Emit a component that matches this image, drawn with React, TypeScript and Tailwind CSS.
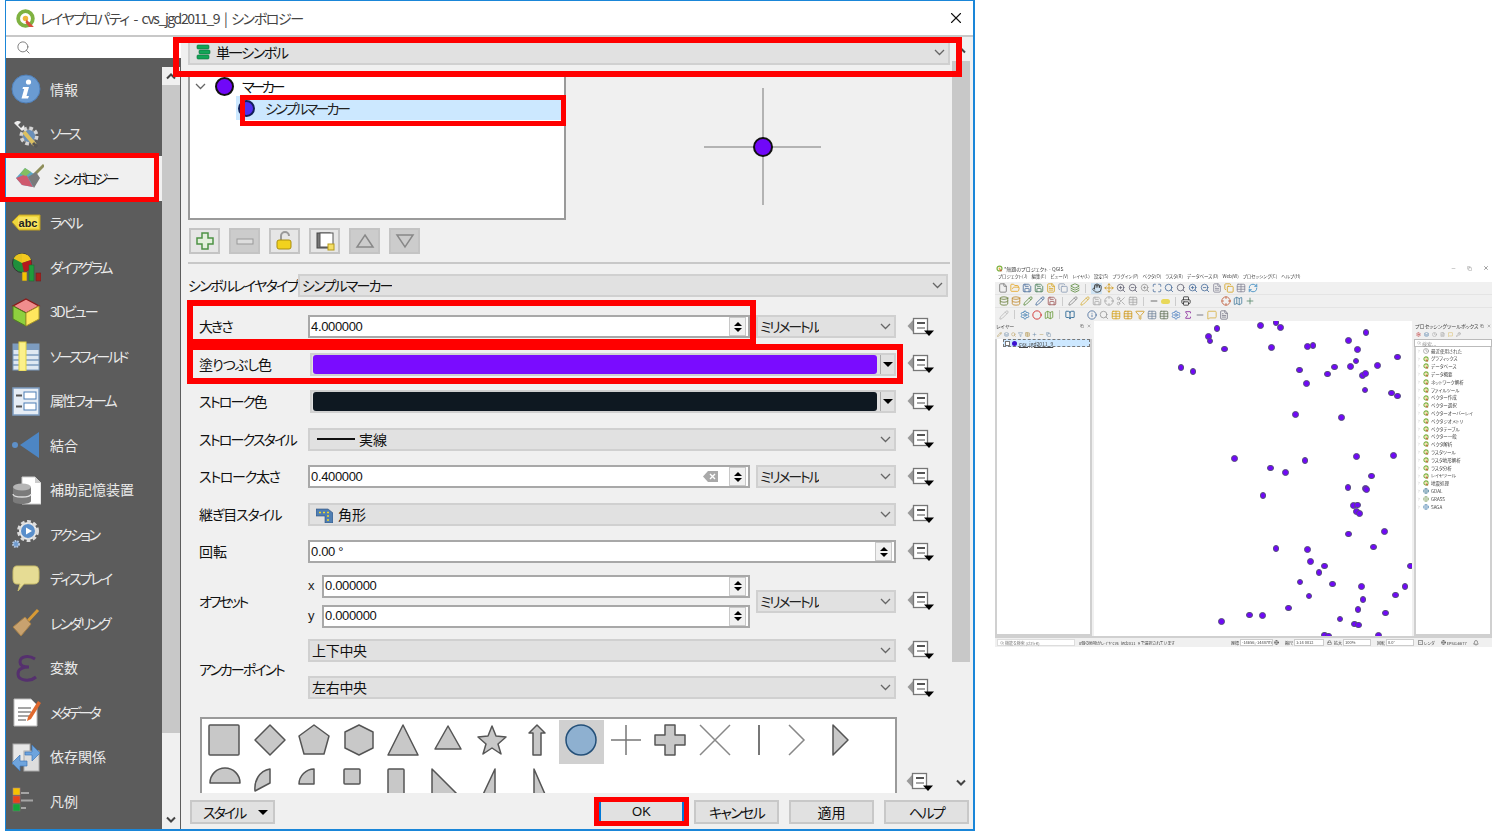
import type { ReactNode } from 'react';
import {
  Bell, BookOpen, Check, ChevronRight, Circle, Clock, Copy, Crosshair, Database, File, FileText, Filter, FolderOpen, Globe, Hand,
  Info, Layers, Lock, Map as MapIcon, Maximize, MessageSquare, Minus, Move, Pencil, Plus, Printer, RefreshCw, Save, Scissors, Search,
  Settings, Sigma, Table, Wrench, X, ZoomIn, ZoomOut,
} from 'lucide-react';

const Qlogo = ({ size }: { size: number }) => (
  <svg width={size} height={size} viewBox="0 0 20 20">
    <circle cx="10" cy="10" r="7" fill="none" stroke="#7fb241" strokeWidth="3.6" />
    <circle cx="10" cy="10" r="2.6" fill="#efb73c" />
    <path d="M11 11 L18 18 L13.5 18 L10 14 Z" fill="#d94f3d" />
  </svg>
);

const SidebarIcons: Record<string, ReactNode> = {
  info: (
    <>
      <circle cx="15" cy="15" r="14" fill="#6a9bd2" stroke="#4f7fb8" />
      <circle cx="17.5" cy="8" r="2.6" fill="#fff" />
      <path d="M12 13 H18 L15.5 22 H18 L17 24.5 H10.5 L13.2 15 H11.5 Z" fill="#fff" />
    </>
  ),
  source: (
    <>
      <circle cx="18" cy="17" r="7.5" fill="#888" stroke="#d5d5d5" strokeWidth="4" strokeDasharray="3.5 2.4" />
      <circle cx="18" cy="17" r="6" fill="#6a8fb9" />
      <path d="M3 4 a5 5 0 0 1 7 -1 l-3 3 l3 3 l3 -3 a5 5 0 0 1 -2 6 z" fill="#eee" />
      <path d="M13 13 L24 26" stroke="#dcc060" strokeWidth="4" />
      <path d="M22 24 L26 28" stroke="#555" strokeWidth="3" />
    </>
  ),
  symbology: (
    <>
      <path d="M2 15 L11 5 L23 13 L19 24 L8 22 Z" fill="#5aa7c8" />
      <path d="M2 15 L12 11 L19 24 L8 22 Z" fill="#cf5a6e" />
      <path d="M6 11 L11 5 L17 9 L12 13 Z" fill="#82bf62" />
      <path d="M20 12 L30 2" stroke="#8e8e5a" strokeWidth="3" />
      <path d="M14 14 L22 9 L26 15 L20 25 Z" fill="#7a7a7a" />
    </>
  ),
  label: (
    <>
      <path d="M1 14 L8 7 H29 V22 H8 Z" fill="#f0d63c" stroke="#c0a020" />
      <rect x="7" y="9" width="20" height="11" rx="2" fill="#f7e360" />
      <text x="17" y="19" textAnchor="middle" fontSize="11" fontWeight="700" fontFamily="Liberation Sans" fill="#222">abc</text>
    </>
  ),
  diagram: (
    <>
      <circle cx="11" cy="11" r="9.5" fill="#1f8f3c" stroke="#333" />
      <path d="M11 11 V1.5 A9.5 9.5 0 0 1 20 8 Z" fill="#f4c91e" />
      <path d="M2.5 6.5 A9.5 9.5 0 0 1 11 1.5 V11 Z" fill="#e8c41f" />
      <path d="M11 11 L20 8 A9.5 9.5 0 0 1 13 20.5 Z" fill="#b5181d" />
      <rect x="11" y="20" width="5" height="9" fill="#f4c300" stroke="#665" strokeWidth=".6" />
      <rect x="18" y="13" width="5" height="16" fill="#1f9c3c" stroke="#263" strokeWidth=".6" />
      <rect x="25" y="21" width="5" height="8" fill="#a5201d" stroke="#622" strokeWidth=".6" />
    </>
  ),
  cube: (
    <>
      <path d="M15 2 L28 9 L15 16 L2 9 Z" fill="#f08d8d" stroke="#8b1a1a" strokeWidth="1.4" />
      <path d="M2 9 L15 16 V29 L2 22 Z" fill="#8ed03e" stroke="#4f7f20" />
      <path d="M28 9 L15 16 V29 L28 22 Z" fill="#ffe65e" stroke="#a8982a" />
    </>
  ),
  fields: (
    <>
      <rect x="2" y="3" width="26" height="26" fill="#dfe8f2" stroke="#7d9cc0" />
      <rect x="2" y="3" width="26" height="6" fill="#7d9cc0" />
      <path d="M2 14 H28 M2 19 H28 M2 24 H28" stroke="#7d9cc0" strokeWidth="1.5" />
      <rect x="8" y="1" width="7" height="29" fill="#fbf08a" stroke="#e0d040" />
    </>
  ),
  form: (
    <>
      <rect x="2" y="2" width="26" height="27" fill="#e6edf5" stroke="#7d9cc0" strokeWidth="1.5" />
      <rect x="13" y="6" width="12" height="7" fill="#fff" stroke="#4d7fb6" />
      <rect x="13" y="17" width="12" height="7" fill="#fff" stroke="#4d7fb6" />
      <path d="M5 9.5 H11 M5 20.5 H11" stroke="#555" strokeWidth="2" />
    </>
  ),
  join: (
    <>
      <circle cx="4" cy="15" r="3" fill="#5e90c8" />
      <path d="M28 2 V28 L9 15 Z" fill="#4d86c4" />
    </>
  ),
  aux: (
    <>
      <path d="M11 2 H24 L30 8 V29 H11 Z" fill="#fff" stroke="#ccc" />
      <path d="M24 2 V8 H30" fill="#ccc" />
      <path d="M2 12 V26 C2 30 20 30 20 26 V12 Z" fill="#7b7b7b" />
      <ellipse cx="11" cy="12" rx="9" ry="3.5" fill="#b5b5b5" />
      <path d="M2 19 C2 23 20 23 20 19" fill="none" stroke="#ddd" strokeWidth="1.3" />
    </>
  ),
  action: (
    <>
      <circle cx="17" cy="12" r="9" fill="#eee" stroke="#ddd" strokeWidth="4" strokeDasharray="3.5 2.4" />
      <circle cx="17" cy="12" r="7" fill="#5a8fcb" />
      <path d="M15 8.5 L21 12 L15 15.5 Z" fill="#fff" />
      <circle cx="5" cy="25" r="3" fill="#6f9cd0" stroke="#b5c9e3" strokeWidth="2" strokeDasharray="1.5 1" />
    </>
  ),
  display: (
    <path d="M6 2 H23 C27 2 28 4 28 8 V14 C28 19 26 20 22 20 H13 L7 27 L9 20 H6 C3 20 2 18 2 14 V8 C2 4 3 2 6 2 Z" fill="#e6dc94" stroke="#c9bd6b" />
  ),
  rendering: (
    <>
      <path d="M15 15 L27 2" stroke="#d79a35" strokeWidth="3" />
      <path d="M2 19 L14 9 L20 16 L10 28 Z" fill="#c8a26f" stroke="#a57f48" />
    </>
  ),
  variable: (
    <path d="M24 6 C18 2 9 3 9 9 C9 13 13 14 18 14 C11 14 7 16 7 21 C7 28 19 29 25 24" fill="none" stroke="#55306e" strokeWidth="3" />
  ),
  meta: (
    <>
      <path d="M3 2 H20 L26 8 V29 H3 Z" fill="#fff" stroke="#bbb" />
      <path d="M7 11 H20 M7 15 H20 M7 19 H18 M7 23 H15" stroke="#888" strokeWidth="1.3" />
      <path d="M17 20 L27 4 L30 6 L20 22 L16 24 Z" fill="#e0692e" />
    </>
  ),
  deps: (
    <>
      <rect x="2" y="2" width="17" height="20" fill="#e8e8e8" stroke="#aaa" />
      <rect x="13" y="9" width="15" height="20" fill="#ddd" stroke="#aaa" />
      <path d="M14 10 H21 V3 L29 11 L21 19 V13 H14 Z" fill="#6ea4dd" stroke="#3c77b8" strokeWidth=".7" />
      <path d="M16 19 H9 V13 L1 21 L9 29 V24 H16 Z" fill="#6ea4dd" stroke="#3c77b8" strokeWidth=".7" />
    </>
  ),
  legend: (
    <>
      <rect x="2" y="2" width="7" height="7" fill="#f6c200" stroke="#a88" strokeWidth=".6" />
      <rect x="2" y="10" width="7" height="7" fill="#e8421a" stroke="#a66" strokeWidth=".6" />
      <rect x="2" y="18" width="7" height="7" fill="#12a43a" stroke="#686" strokeWidth=".6" />
      <path d="M10 7 H18 M10 14.5 H22 M10 22 H15" stroke="#a5a5a5" strokeWidth="2" />
    </>
  ),
};

// third value: the kana run narrow in the original UI font, kanji labels do not
const sidebarItems: [string, string, string][] = [
  ['info', '情報', ''], ['source', 'ソース', 'tracking-[-2.8px]'], ['symbology', 'シンボロジー', 'tracking-[-2.7px]'], ['label', 'ラベル', 'tracking-[-3px]'],
  ['diagram', 'ダイアグラム', 'tracking-[-2.3px]'], ['cube', '3Dビュー', 'tracking-[-1.8px]'], ['fields', 'ソースフィールド', 'tracking-[-2.6px]'], ['form', '属性フォーム', 'tracking-[-1.9px]'],
  ['join', '結合', ''], ['aux', '補助記憶装置', ''], ['action', 'アクション', 'tracking-[-2.4px]'], ['display', 'ディスプレイ', 'tracking-[-2px]'],
  ['rendering', 'レンダリング', 'tracking-[-2.5px]'], ['variable', '変数', ''], ['meta', 'メタデータ', 'tracking-[-3px]'], ['deps', '依存関係', ''], ['legend', '凡例', ''],
];

const Chevron = ({ className = 'text-[#666]' }: { className?: string }) => (
  <svg width="11" height="7" viewBox="0 0 11 7" className={className}>
    <path d="M1 1 L5.5 5.5 L10 1" fill="none" stroke="currentColor" strokeWidth="1.3" />
  </svg>
);

const ChevronUpBold = () => (
  <svg width="10" height="7" viewBox="0 0 10 7"><path d="M1 5.5 L5 1.5 L9 5.5" fill="none" stroke="#444" strokeWidth="2" /></svg>
);
const ChevronDownBold = () => (
  <svg width="10" height="7" viewBox="0 0 10 7"><path d="M1 1.5 L5 5.5 L9 1.5" fill="none" stroke="#444" strokeWidth="2" /></svg>
);

const DataDefined = () => (
  <svg width="27" height="22" viewBox="0 0 27 22" className="shrink-0">
    <path d="M0.5 10 L7 3 H8 V17 H7 Z" fill="#9a9a9a" />
    <rect x="6.5" y="2.5" width="14" height="15" fill="#fff" stroke="#777" strokeWidth="1.3" />
    <path d="M10 7 H18" stroke="#555" strokeWidth="2" />
    <path d="M10 12 H18" stroke="#888" strokeWidth="1.5" />
    <path d="M17 14.5 H27 L22 20 Z" fill="#000" />
  </svg>
);

const Spin = ({ className = '' }: { className?: string }) => (
  <div className={`flex h-[19px] w-[17px] shrink-0 flex-col items-center justify-center gap-[2px] border border-[#c8c8c8] bg-[#f0f0f0] ${className}`}>
    <div className="h-0 w-0 border-x-[4px] border-b-[4px] border-x-transparent border-b-black" />
    <div className="h-0 w-0 border-x-[4px] border-t-[4px] border-x-transparent border-t-black" />
  </div>
);

const NumInput = ({ value, clear, className }: { value: string; clear?: boolean; className: string }) => (
  <div className={`flex h-[23px] items-center border-2 border-[#a8a8a8] bg-white pl-[1px] pr-[2px] ${className}`}>
    <span className="flex-1 font-['Liberation_Sans',sans-serif] text-[13px] tracking-[-0.35px] text-[#111]">{value}</span>
    {clear && (
      <svg width="15" height="11" viewBox="0 0 15 11" className="mr-[11px]">
        <path d="M0 5.5 L5 0 H15 V11 H5 Z" fill="#a9a9a9" />
        <path d="M7 3 L12 8 M12 3 L7 8" stroke="#fff" strokeWidth="1.4" />
      </svg>
    )}
    <Spin />
  </div>
);

const Combo = ({ children, className }: { children: ReactNode; className: string }) => (
  <div className={`flex h-[23px] items-center justify-between border-2 border-[#d0d0d0] bg-[#e1e1e1] pl-[2px] pr-[3px] text-[14px] text-[#111] ${className}`}>
    <div className="flex items-center gap-[4px] overflow-hidden whitespace-nowrap">{children}</div>
    <Chevron />
  </div>
);

const Unit = () => <Combo className="ml-[6px] w-[140px] text-[#222]"><span className="tracking-[-2.3px]">ミリメートル</span></Combo>;

const ColorButton = ({ color }: { color: string }) => (
  <div className="ml-[2px] flex h-[23px] w-[586px] items-center border-2 border-[#d0d0d0] bg-[#e1e1e1] pl-[1px]">
    <div className={`h-[19px] w-[564px] rounded-[3px] ${color}`} />
    <div className="ml-[3px] h-[19px] w-px bg-[#aaa]" />
    <div className="ml-[2px] h-0 w-0 border-x-[5px] border-t-[5px] border-x-transparent border-t-black" />
  </div>
);

const FormRow = ({ label, track = 'tracking-[-1.8px]', children }: { label: string; track?: string; children: ReactNode }) => (
  <div className="flex h-[37.5px] items-center pl-[18px]">
    <div className={`w-[109px] shrink-0 whitespace-nowrap text-[14px] text-[#111] ${track}`}>{label}</div>
    {children}
    <div className="ml-[11px]"><DataDefined /></div>
  </div>
);

const ToolButton = ({ disabled, children }: { disabled?: boolean; children: ReactNode }) => (
  <div className={`flex h-[26px] w-[31px] items-center justify-center border-2 border-[#c4c4c4] ${disabled ? 'bg-[#cccccc]' : 'bg-[#e6e6e6]'}`}>
    <svg width="22" height="20" viewBox="0 0 22 20">{children}</svg>
  </div>
);

const sf = { fill: '#c8c8c8', stroke: '#555', strokeWidth: 1.5, strokeLinejoin: 'round' as const };

const shapesTop: ReactNode[] = [
  <rect x="6" y="7" width="30" height="30" rx="1" {...sf} />,
  <path d="M22 7 L37 22 L22 37 L7 22 Z" {...sf} />,
  <path d="M22 7 L37 18 L32 36 L12 36 L7 18 Z" {...sf} />,
  <path d="M22 7 L36 14 V30 L22 37 L8 30 V14 Z" {...sf} />,
  <path d="M22 7 L37 37 H7 Z" {...sf} />,
  <path d="M22 8 L35 31 H9 Z" {...sf} />,
  <path d="M22 8 L26 18 L36 19 L28 26 L31 36 L22 30 L13 36 L16 26 L8 19 L18 18 Z" {...sf} />,
  <path d="M22 7 L30 15 H26 V37 H18 V15 H14 Z" {...sf} />,
  <circle cx="22" cy="22" r="15" fill="#8eb0d0" stroke="#234f78" strokeWidth="1.5" />,
  <path d="M7 22 H37 M22 7 V37" stroke="#777" strokeWidth="1.5" fill="none" />,
  <path d="M17 7 H27 V17 H37 V27 H27 V37 H17 V27 H7 V17 H17 Z" {...sf} />,
  <path d="M7 7 L37 37 M37 7 L7 37" stroke="#888" strokeWidth="1.5" fill="none" />,
  <path d="M22 7 V37" stroke="#777" strokeWidth="2" fill="none" />,
  <path d="M7 7 L22 22 L7 37" stroke="#888" strokeWidth="1.5" fill="none" />,
  <path d="M7 7 L22 22 L7 37 Z" {...sf} />,
];

const shapesBottom: ReactNode[] = [
  <path d="M7 23 A15 15 0 0 1 37 23 Z" {...sf} transform="translate(0 -1)" />,
  <path d="M22 8 V22 L7 30 C6 20 11 10 22 8 Z" {...sf} />,
  <path d="M22 8 V23 H7 C7 15 14 8 22 8 Z" {...sf} />,
  <rect x="7" y="8" width="16" height="15" rx="1" {...sf} />,
  <rect x="7" y="8" width="16" height="40" rx="1" {...sf} />,
  <path d="M6 8 L34 36 H6 Z" {...sf} />,
  <path d="M25 8 V40 H10 Z" {...sf} />,
  <path d="M19 8 L33 40 H19 Z" {...sf} />,
];

/* --- miniature QGIS window --- */

const dots: [number, number][] = [
  ...[
    [140, 25], [115, 48], [119, 62], [163, 86], [32, 142], [68, 153], [271, 15], [317, 7], [331, 21], [303, 82], [412, 79], [428, 76], [387, 149],
    [408, 190], [375, 283], [513, 292], [472, 161], [492, 140], [540, 139], [557, 122], [561, 88], [535, 60], [587, 36], [622, 135], [682, 110],
    [576, 165], [586, 159], [584, 209], [663, 218], [682, 227], [193, 414], [300, 443], [346, 457], [404, 421], [559, 408], [670, 406], [604, 467],
  ].map(([x, y]): [number, number] => [76 + x / 3, y / 3 - 1]),
  ...[
    [278, 46], [533, 21], [586, 25], [589, 27], [550, 76], [562, 74], [558, 94], [567, 100], [535, 161], [642, 154], [610, 200], [317, 204], [412, 207],
    [420, 244], [462, 257], [446, 277], [720, 257], [389, 305], [486, 311], [574, 319], [704, 319], [416, 347], [676, 344], [578, 358], [355, 383],
    [563, 388], [645, 398], [237, 404], [276, 405], [154, 424], [509, 416], [552, 431], [565, 434], [463, 464], [474, 467], [625, 465],
  ].map(([x, y]): [number, number] => [76 + x / 3, 159 + y / 3]),
];

const menus = ['プロジェクト(J)', '編集(E)', 'ビュー(V)', 'レイヤ(L)', '設定(S)', 'プラグイン(P)', 'ベクタ(O)', 'ラスタ(R)', 'データベース(D)', 'Web(W)', 'プロセッシング(C)', 'ヘルプ(H)'];

const toolbox = ['最近使用された', 'グラフィックス', 'データベース', 'データ概要', 'ネットワーク解析', 'ファイルツール', 'ベクター作成', 'ベクター選択', 'ベクターオーバーレイ', 'ベクタジオメトリ', 'ベクタテーブル', 'ベクター一般', 'ベクタ解析', 'ラスタツール', 'ラスタ地形解析', 'ラスタ分析', 'レイヤツール', '地震処理', 'GDAL', 'GRASS', 'SAGA'];

const Mi = ({ icon: Icon, color }: { icon: typeof File; color: string }) => <Icon size={10} color={color} strokeWidth={2} className="shrink-0" />;
const Sep = () => <div className="mx-[3px] h-[9px] w-px shrink-0 bg-[#ccc]" />;

const row1: [typeof File, string][] = [
  [File, '#777'], [FolderOpen, '#e6a520'], [Save, '#4a6f9c'], [Save, '#4a7f5c'], [FileText, '#d6a420'], [Copy, '#8a9bb5'], [Layers, '#5a8a3c'],
];
const row1b: [typeof File, string][] = [
  [Move, '#d09a20'], [ZoomIn, '#667'], [ZoomOut, '#667'], [ZoomIn, '#999'], [Maximize, '#4a6f9c'], [Search, '#4a6f9c'], [Search, '#667'],
  [ZoomIn, '#4a6f9c'], [ZoomOut, '#4a6f9c'], [FileText, '#889'], [Copy, '#d6a420'], [Table, '#889'], [RefreshCw, '#3a8ac0'],
];
const row2: [typeof File, string][] = [[Database, '#6a7f3c'], [Database, '#c08a30'], [Pencil, '#5a8a3c'], [Pencil, '#4a6f9c'], [Save, '#a05a5a']];
const row2b: [typeof File, string][] = [[Pencil, '#888'], [Pencil, '#d6b040'], [Save, '#aaa'], [Crosshair, '#aaa'], [Scissors, '#aaa'], [Table, '#aaa']];
const row3: [typeof File, string][] = [[Info, '#4a6f9c'], [Search, '#999'], [Table, '#d6a420'], [Table, '#d09a20'], [Filter, '#d09a20'], [Table, '#7a8aa0'], [Table, '#6a7a60'], [Settings, '#4a80c0'], [Sigma, '#8a2a9a'], [Minus, '#667'], [MessageSquare, '#d6b040'], [FileText, '#778']];

const MiniWindow = () => (
  <div className="mt-[265px] ml-[20px] flex h-[382px] w-[497px] shrink-0 flex-col bg-white text-[5px] leading-none text-[#444] blur-[0.35px]">
    <div className="flex h-[6px] shrink-0 items-center pl-[1px]">
      <Qlogo size={7} />
      <span className="ml-[1px]">*無題のプロジェクト - QGIS</span>
      <div className="ml-auto flex items-center gap-[11px] pr-[3px] text-[#888]">
        <Minus size={5} /><Copy size={5} /><X size={6} color="#444" />
      </div>
    </div>
    <div className="flex h-[11px] shrink-0 items-center gap-[4px] pl-[3px] whitespace-nowrap text-[4.5px]">
      {menus.map(m => <span key={m}>{m}</span>)}
    </div>
    <div className="flex h-[39px] shrink-0 flex-col bg-[#f0f0f0]">
      <div className="flex h-[12px] items-center gap-[2px] pl-[3px]">
        {row1.map(([i, c], n) => <Mi key={n} icon={i} color={c} />)}
        <Sep />
        <div className="flex h-[11px] w-[11px] items-center justify-center bg-[#cfe3f3]"><Mi icon={Hand} color="#333" /></div>
        {row1b.map(([i, c], n) => <Mi key={n} icon={i} color={c} />)}
      </div>
      <div className="flex h-[13px] items-center gap-[2px] border-t border-[#e4e4e4] pl-[4px]">
        {row2.map(([i, c], n) => <Mi key={n} icon={i} color={c} />)}
        <Sep />
        {row2b.map(([i, c], n) => <Mi key={n} icon={i} color={c} />)}
        <Sep />
        <Mi icon={Minus} color="#555" /><div className="h-[5px] w-[9px] rounded-sm bg-[#e8d85a]" /><Sep />
        <Mi icon={Printer} color="#333" />
        <div className="w-[26px]" />
        <Mi icon={Crosshair} color="#c06040" /><Mi icon={MapIcon} color="#4a80a0" /><Mi icon={Plus} color="#5a8a6c" />
      </div>
      <div className="flex h-[14px] items-center gap-[2px] border-t border-[#e4e4e4] pl-[4px]">
        <Mi icon={Pencil} color="#bbb" /><Sep />
        <Mi icon={Settings} color="#3a7ab0" /><Mi icon={Circle} color="#d02020" /><Mi icon={MapIcon} color="#6a9a3c" /><Sep />
        <Mi icon={BookOpen} color="#1f5f8f" /><div className="w-[8px]" />
        {row3.map(([i, c], n) => <Mi key={n} icon={i} color={c} />)}
      </div>
    </div>
    <div className="flex min-h-0 flex-1 border-b-2 border-[#d0d0d0] bg-[#f0f0f0]">
      <div className="flex w-[97px] shrink-0 flex-col">
        <div className="flex h-[9px] items-center justify-between px-[1px]"><span>レイヤー</span><span className="flex gap-[3px]"><Copy size={4} /><X size={4} /></span></div>
        <div className="flex h-[9px] items-center gap-[2px] pl-[2px]">
          {[Pencil, Layers, Search, Filter, Table, Plus, Minus, Copy].map((I, n) => <I key={n} size={5} color={n % 2 ? '#5a7fa0' : '#b09040'} />)}
        </div>
        <div className="flex-1 border-2 border-t-0 border-[#d0d0d0] bg-white">
          <div className="ml-[6px] flex h-[8px] items-center border border-dashed border-[#777] bg-[#cde8ff] pl-[1px]">
            <div className="mr-[2px] h-[5px] w-[5px] border border-[#777] bg-white" />
            <div className="mr-[2px] h-[5px] w-[5px] rounded-full bg-[#3a12d0]" />
            <span className="underline">cvs_jgd2011_9</span>
          </div>
        </div>
      </div>
      <div className="relative ml-[2px] h-full w-[318px] shrink-0 overflow-hidden bg-white">
        {dots.map(([x, y], n) => (
          <div key={n} className="absolute h-[6.5px] w-[6.5px] rounded-full border border-[#55507a] bg-[#7008f8]" style={{ left: x - 3, top: y - 3 }} />
        ))}
      </div>
      <div className="ml-[2px] flex min-w-0 flex-1 flex-col">
        <div className="flex h-[9px] items-center justify-between px-[1px]"><span className="whitespace-nowrap">プロセッシングツールボックス</span><span className="flex gap-[3px]"><Copy size={4} /><X size={4} /></span></div>
        <div className="flex h-[9px] items-center gap-[3px] pl-[2px]">
          {[Settings, Layers, Clock, FileText, MessageSquare, Wrench].map((I, n) => <I key={n} size={5} color={['#c03030', '#3a70a0', '#999', '#999', '#d6b040', '#888'][n]} />)}
        </div>
        <div className="flex h-[8px] items-center gap-[1px] border border-[#bbb] bg-white pl-[2px] text-[#999]"><Search size={4} />検索...</div>
        <div className="flex-1 overflow-hidden border-2 border-t-0 border-[#d0d0d0] bg-white">
          {toolbox.map((t, n) => (
            <div key={t} className="flex h-[7.8px] items-center gap-[2px] pl-[1px] whitespace-nowrap text-[4.5px]">
              <ChevronRight size={4} color="#999" />
              {n === 0 ? <Clock size={6} color="#777" /> : n < 18 ? <Qlogo size={6} /> : <Globe size={6} color={n === 18 ? '#35708f' : n === 19 ? '#80a060' : '#4a80b0'} />}
              <span>{t}</span>
            </div>
          ))}
        </div>
      </div>
    </div>
    <div className="flex h-[9px] shrink-0 items-center whitespace-nowrap bg-[#f0f0f0] text-[4px]">
      <div className="ml-[2px] flex h-[7px] w-[78px] items-center gap-[1px] border border-[#ddd] bg-white pl-[2px] text-[#777]"><Search size={4} />機能を検索 (Ctrl+K)</div>
      <span className="ml-[4px] w-[152px] overflow-hidden">0個の地物がレイヤ cvs_jgd2011_9 で選択されています</span>
      <span>座標</span>
      <div className="ml-[1px] h-[7px] w-[33px] border border-[#ccc] bg-white pl-[1px]">-14656,-14487m</div>
      <Globe size={5} className="ml-[1px]" />
      <span className="ml-[6px]">縮尺</span>
      <div className="ml-[1px] h-[7px] w-[30px] border border-[#ccc] bg-white pl-[1px]">1:14 0012</div>
      <Lock size={5} className="ml-[3px]" />
      <span className="ml-[2px]">拡大</span>
      <div className="ml-[1px] h-[7px] w-[28px] border border-[#ccc] bg-white pl-[1px]">100%</div>
      <span className="ml-[6px]">回転</span>
      <div className="ml-[1px] h-[7px] w-[28px] border border-[#ccc] bg-white pl-[1px]">0.0°</div>
      <Check size={5} className="ml-[4px] border border-[#999]" />
      <span className="ml-[1px]">レンダ</span>
      <Globe size={5} className="ml-[6px]" />
      <span className="ml-[1px]">EPSG:6677</span>
      <Bell size={6} className="ml-[6px]" />
    </div>
  </div>
);

export default function App() {
  return (
    <div className="relative flex h-[831px] w-[1492px] overflow-hidden bg-white font-['Noto_Sans_CJK_JP',sans-serif] [font-feature-settings:'palt']">
      {/* dialog */}
      <div className="ml-[5px] flex h-[831px] w-[970px] shrink-0 flex-col border-2 border-l border-t border-[#1a86d8] bg-[#f0f0f0]">
        <div className="flex h-[36px] shrink-0 items-center border-b-2 border-[#c8c8c8] bg-white pr-[8px] pl-[9px]">
          <Qlogo size={21} />
          <span className="ml-[4px] text-[14px] tracking-[-1.4px] text-[#444] [word-spacing:3px]">レイヤプロパティ - cvs_jgd2011_9 | シンボロジー</span>
          <X size={18} strokeWidth={1.5} className="ml-auto text-[#111]" />
        </div>
        <div className="flex min-h-0 flex-1">
          {/* left column */}
          <div className="flex w-[175px] shrink-0 flex-col">
            <div className="flex h-[21px] shrink-0 items-center bg-white pl-[10px]">
              <Search size={15} strokeWidth={1.5} className="text-[#777]" />
            </div>
            <div className="flex min-h-0 flex-1 bg-[#5c5c5c]">
              <div className="w-[156px] shrink-0 pt-[9px]">
                {sidebarItems.map(([key, text, track]) => {
                  const selected = key === 'symbology';
                  return (
                    <div key={key} className={`flex h-[44.5px] items-center ${selected ? 'bg-[#f0f0f0] pl-[8px] text-[#111]' : 'pl-[5px] text-[#eaeaea]'}`}>
                      <svg width="30" height="30" viewBox="0 0 30 30" className="shrink-0">{SidebarIcons[key]}</svg>
                      <span className={`ml-[9px] text-[14px] whitespace-nowrap ${track}`}>{text}</span>
                    </div>
                  );
                })}
              </div>
              <div className="mt-[9px] flex w-[18px] shrink-0 flex-col items-center bg-[#f0f0f0]">
                <div className="flex h-[18px] items-center"><ChevronUpBold /></div>
                <div className="h-[648px] w-full bg-[#c8c8c8]" />
                <div className="mt-auto flex h-[18px] items-center pb-[2px]"><ChevronDownBold /></div>
              </div>
            </div>
          </div>
          {/* main */}
          <div className="flex min-w-0 flex-1 flex-col">
            <div className="flex min-h-0 flex-1">
              <div className="min-w-0 flex-1 overflow-hidden pt-[2px] pl-[7px]">
                <div className="flex h-[26px] w-[762px] items-center justify-between border-2 border-[#d0d0d0] bg-[#e1e1e1] pr-[3px] pl-[6px] text-[14px] text-[#111]">
                  <div className="flex items-center gap-[5px]">
                    <svg width="15" height="16" viewBox="0 0 15 16">
                      <rect x="1" y="1" width="12" height="4" rx="1" fill="#12a557" stroke="#0b6a37" strokeWidth=".6" />
                      <rect x="3" y="6" width="11" height="4" rx="1" fill="#12a557" stroke="#0b6a37" strokeWidth=".6" />
                      <rect x="1" y="11" width="12" height="4" rx="1" fill="#12a557" stroke="#0b6a37" strokeWidth=".6" />
                    </svg>
                    <span className="tracking-[-1.4px]">単一シンボル</span>
                  </div>
                  <Chevron />
                </div>
                <div className="mt-[9px] flex w-[762px]">
                  <div className="relative h-[146px] w-[378px] shrink-0 border-2 border-[#9a9a9a] bg-white">
                    <div className="flex h-[20px] items-center pl-[5px] text-[14px] text-[#111]">
                      <Chevron />
                      <div className="ml-[9px] h-[19px] w-[19px] rounded-full border-2 border-[#111] bg-[#7008f8]" />
                      <span className="ml-[8px] tracking-[-3.2px]">マーカー</span>
                    </div>
                    <div className="ml-[46px] flex h-[24px] items-center bg-[#cce8ff] pl-[2px] text-[14px] text-[#222]">
                      <div className="h-[17px] w-[17px] rounded-full border-2 border-[#12205a] bg-[#5030f0]" />
                      <span className="ml-[10px] tracking-[-2.6px]">シンプルマーカー</span>
                    </div>
                  </div>
                  <div className="relative flex h-[146px] flex-1 items-center justify-center">
                    <svg width="120" height="120" viewBox="0 0 120 120" className="ml-[10px]">
                      <path d="M1 60 H118 M60 1 V118" stroke="#777" strokeWidth="1" />
                      <circle cx="60" cy="60" r="9" fill="#7008f8" stroke="#111" strokeWidth="2" />
                    </svg>
                  </div>
                </div>
                <div className="mt-[8px] flex gap-[9px] pl-[1px]">
                  <ToolButton>
                    <path d="M8 2 H14 V7 H19 V13 H14 V18 H8 V13 H3 V7 H8 Z" fill="#e3f0dd" stroke="#4e9245" strokeWidth="1.5" />
                  </ToolButton>
                  <ToolButton disabled><rect x="3" y="8" width="16" height="5" fill="#ddd" stroke="#999" /></ToolButton>
                  <ToolButton>
                    <path d="M7 9 V5 A4 4 0 0 1 15 5" fill="none" stroke="#999" strokeWidth="2" />
                    <rect x="3" y="9" width="14" height="9" rx="2" fill="#f1d21e" stroke="#a98e10" />
                  </ToolButton>
                  <ToolButton>
                    <rect x="3" y="2" width="13" height="15" fill="#777" stroke="#444" />
                    <rect x="6" y="2" width="13" height="14" fill="#fff" stroke="#555" />
                    <rect x="14" y="13" width="6" height="6" fill="#f4de66" stroke="#b59a1a" />
                  </ToolButton>
                  <ToolButton disabled><path d="M11 4 L19 16 H3 Z" fill="#ccc" stroke="#888" strokeWidth="1.5" /></ToolButton>
                  <ToolButton disabled><path d="M3 4 H19 L11 16 Z" fill="#ccc" stroke="#888" strokeWidth="1.5" /></ToolButton>
                </div>
                <div className="mt-[8px] h-[2px] w-[762px] bg-[#c8c8c8]" />
                <div className="mt-[10px] flex h-[23px] w-[761px] items-center">
                  <span className="w-[110px] shrink-0 whitespace-nowrap text-[14px] tracking-[-1.7px] text-[#111]">シンボルレイヤタイプ</span>
                  <Combo className="w-[650px]"><span className="tracking-[-1.8px]">シンプルマーカー</span></Combo>
                </div>
                <div className="mt-[11px] -ml-[7px] w-[769px]">
                  <FormRow label="大きさ" track="tracking-[-2px]"><NumInput value="4.000000" className="w-[442px]" /><Unit /></FormRow>
                  <FormRow label="塗りつぶし色" track="tracking-[-1px]"><ColorButton color="bg-[#7a0cff]" /></FormRow>
                  <FormRow label="ストローク色"><ColorButton color="bg-[#0e1821]" /></FormRow>
                  <FormRow label="ストロークスタイル">
                    <Combo className="w-[588px]"><span className="ml-[5px] h-[2px] w-[38px] bg-[#111]" /><span>実線</span></Combo>
                  </FormRow>
                  <FormRow label="ストローク太さ" track="tracking-[-1.3px]"><NumInput value="0.400000" clear className="w-[442px]" /><Unit /></FormRow>
                  <FormRow label="継ぎ目スタイル" track="tracking-[-1.2px]">
                    <Combo className="w-[588px]">
                      <svg width="17" height="17" viewBox="0 0 17 17" className="ml-[4px]">
                        <path d="M0 3 H12 L17 7 V17 H9 V10 H0 Z" fill="#4f7eb3" stroke="#2e4f7a" strokeWidth=".6" />
                        <path d="M3 6.5 H5 M7 6.5 H9 M11 6.5 H13 M11 10 H13 M11 14 H13" stroke="#f0d82c" strokeWidth="1.5" />
                      </svg>
                      <span className="ml-[1px]">角形</span>
                    </Combo>
                  </FormRow>
                  <FormRow label="回転" track=""><NumInput value="0.00 °" className="w-[588px]" /></FormRow>
                  <div className="flex h-[61px] items-center pl-[18px]">
                    <div className="w-[109px] shrink-0 text-[14px] tracking-[-2.4px] text-[#111]">オフセット</div>
                    <div className="flex w-[442px] flex-col gap-[7px]">
                      <div className="flex items-center"><span className="w-[14px] font-['Liberation_Sans',sans-serif] text-[13px] text-[#222]">x</span><NumInput value="0.000000" className="w-[428px]" /></div>
                      <div className="flex items-center"><span className="w-[14px] font-['Liberation_Sans',sans-serif] text-[13px] text-[#222]">y</span><NumInput value="0.000000" className="w-[428px]" /></div>
                    </div>
                    <Unit />
                    <div className="ml-[11px]"><DataDefined /></div>
                  </div>
                  <div className="flex items-center pl-[18px]">
                    <div className="w-[109px] shrink-0 whitespace-nowrap text-[14px] tracking-[-2px] text-[#111]">アンカーポイント</div>
                    <div className="flex w-[588px] flex-col">
                      <div className="flex h-[37.5px] items-center"><Combo className="w-[588px]"><span className="tracking-[-0.3px]">上下中央</span></Combo></div>
                      <div className="flex h-[37.5px] items-center"><Combo className="w-[588px]"><span className="tracking-[-0.3px]">左右中央</span></Combo></div>
                    </div>
                    <div className="ml-[11px] flex flex-col">
                      <div className="flex h-[37.5px] items-center"><DataDefined /></div>
                      <div className="flex h-[37.5px] items-center"><DataDefined /></div>
                    </div>
                  </div>
                </div>
                <div className="-ml-[7px] mt-[10px] flex w-[769px] pl-[19px]">
                  <div className="h-[100px] w-[697px] shrink-0 border-2 border-b-0 border-[#9a9a9a] bg-white pl-[1px] pt-[1px]">
                    <div className="flex">
                      {shapesTop.map((s, n) => (
                        <div key={n} className={`flex h-[44px] w-[44.5px] shrink-0 justify-center ${n === 8 ? 'bg-[#d0d0d0]' : ''}`}>
                          <svg width="44" height="44" viewBox="0 0 44 44" className="-mt-[2px]">{s}</svg>
                        </div>
                      ))}
                    </div>
                    <div className="flex -mt-[3px]">
                      {shapesBottom.map((s, n) => (
                        <div key={n} className="flex h-[44px] w-[44.5px] shrink-0 justify-center">
                          <svg width="44" height="44" viewBox="0 0 44 44">{s}</svg>
                        </div>
                      ))}
                    </div>
                  </div>
                  <div className="ml-[9px] mt-[54px]"><DataDefined /></div>
                </div>
              </div>
              <div className="mt-[3px] flex w-[18px] shrink-0 flex-col items-center">
                <div className="flex h-[21px] items-center"><ChevronUpBold /></div>
                <div className="h-[601px] w-full bg-[#c8c8c8]" />
                <div className="mt-auto flex h-[21px] items-center"><ChevronDownBold /></div>
              </div>
              <div className="w-[3px] shrink-0" />
            </div>
            <div className="flex h-[36px] shrink-0 items-center pt-[2px] pr-[4px] pl-[9px] text-[14px] text-[#111]">
              <div className="flex h-[24px] w-[85px] items-center justify-between border-2 border-[#c8c8c8] bg-[#e1e1e1] pr-[5px] pl-[11px] whitespace-nowrap">
                <span className="tracking-[-2px]">スタイル</span>
                <div className="h-0 w-0 border-x-[5px] border-t-[5px] border-x-transparent border-t-black" />
              </div>
              <div className="ml-auto flex gap-[10px]">
                <div className="flex h-[24px] w-[85px] items-center justify-center border-x-2 border-[#0078d7] bg-[#e1e1e1] font-['Liberation_Sans',sans-serif] text-[13px]">OK</div>
                {['キャンセル', '適用', 'ヘルプ'].map(b => (
                  <div key={b} className={`flex h-[24px] w-[85px] items-center justify-center border-2 border-[#c8c8c8] bg-[#e1e1e1] ${b === '適用' ? '' : 'tracking-[-1.7px]'}`}>{b}</div>
                ))}
              </div>
            </div>
          </div>
        </div>
      </div>
      <MiniWindow />
      {/* red highlight boxes drawn over the screenshot */}
      <div className="absolute top-[153px] left-0 h-[49px] w-[159px] border-[5px] border-[#ff0000]" />
      <div className="absolute top-[37px] left-[173px] h-[40px] w-[789px] border-[6px] border-[#ff0000]" />
      <div className="absolute top-[95px] left-[240px] h-[31px] w-[326px] border-[5px] border-[#ff0000]" />
      <div className="absolute top-[300px] left-[187px] h-[45px] w-[569px] border-[6px] border-[#ff0000]" />
      <div className="absolute top-[344px] left-[187px] h-[40px] w-[716px] border-[6px] border-[#ff0000]" />
      <div className="absolute top-[797px] left-[594px] h-[29px] w-[95px] border-[5px] border-[#ff0000]" />
    </div>
  );
}
